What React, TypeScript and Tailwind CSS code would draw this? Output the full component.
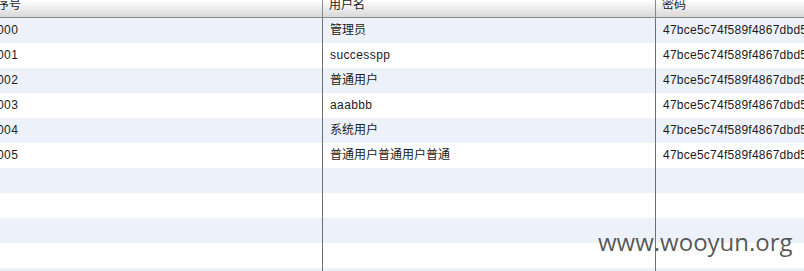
const rows = [
  { id: '000', name: '管理员', pwd: '47bce5c74f589f4867dbd57e9ca9f808' },
  { id: '001', name: 'successpp', pwd: '47bce5c74f589f4867dbd57e9ca9f808' },
  { id: '002', name: '普通用户', pwd: '47bce5c74f589f4867dbd57e9ca9f808' },
  { id: '003', name: 'aaabbb', pwd: '47bce5c74f589f4867dbd57e9ca9f808' },
  { id: '004', name: '系统用户', pwd: '47bce5c74f589f4867dbd57e9ca9f808' },
  { id: '005', name: '普通用户普通用户普通', pwd: '47bce5c74f589f4867dbd57e9ca9f808' },
  { id: '', name: '', pwd: '' },
  { id: '', name: '', pwd: '' },
  { id: '', name: '', pwd: '' },
  { id: '', name: '', pwd: '' },
  { id: '', name: '', pwd: '' },
];

const cell = 'flex h-[25px] items-center overflow-hidden whitespace-nowrap pb-[2px] pl-[7px]';

export default function App() {
  return (
    <div className="relative h-[271px] w-[804px] overflow-hidden bg-white text-[12px] text-[#1c1c1c] [font-family:'Liberation_Sans','Noto_Sans_CJK_SC',sans-serif]">
      <div className="ml-[-10px] w-[1000px]">
        <div className="grid h-[18px] grid-cols-[333px_333px_334px] border-b border-[#8a8a8a] bg-gradient-to-b from-white to-[#d9d9d9]">
          <div className="mt-[-3px] border-r border-[#8a8a8a] pl-[7px] leading-[16px]">序号</div>
          <div className="mt-[-3px] border-r border-[#8a8a8a] pl-[6px] leading-[16px]">用户名</div>
          <div className="mt-[-3px] pl-[6px] leading-[16px]">密码</div>
        </div>
        {rows.map((r, i) => (
          <div
            key={i}
            className={`grid grid-cols-[333px_333px_334px] ${i % 2 === 0 ? 'bg-[#edf2fa]' : 'bg-white'}`}
          >
            <div className={`${cell} border-r border-[#6f6f6f] tracking-[0.4px]`}>{r.id}</div>
            <div
              className={`${cell} border-r border-[#6f6f6f] pl-[6px] ${/^[\x00-\x7f]*$/.test(r.name) ? 'tracking-[0.4px]' : ''}`}
            >
              {r.name}
            </div>
            <div className={`${cell} tracking-[0.25px]`}>{r.pwd}</div>
          </div>
        ))}
      </div>
      <div className="absolute left-[598px] top-[226px] text-[24px] leading-[32px] text-[#3a3a3a]/85 [font-family:'Open_Sans',sans-serif]">
        www.wooyun.org
      </div>
    </div>
  );
}
